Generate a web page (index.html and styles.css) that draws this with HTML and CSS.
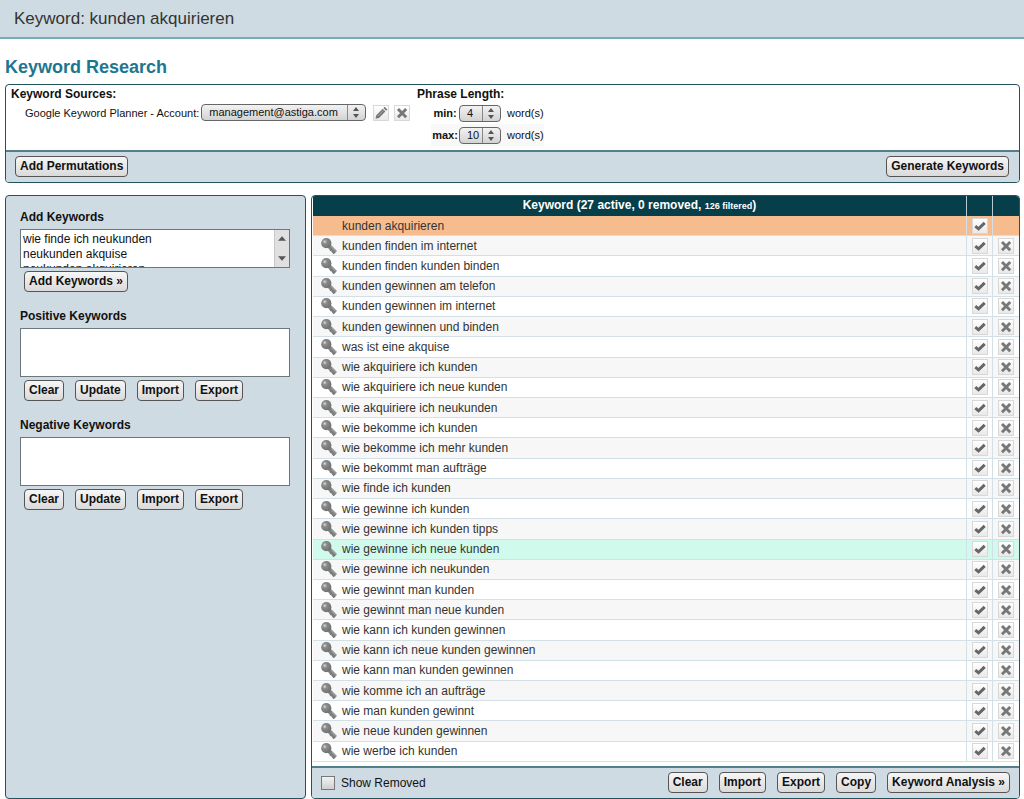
FILE: index.html
```html
<!DOCTYPE html>
<html lang="de">
<head>
<meta charset="utf-8">
<meta name="viewport" content="width=device-width, initial-scale=1">
<title>Keyword: kunden akquirieren</title>
<link rel="stylesheet" href="styles.css">
</head>
<body>
<svg class="sprite" aria-hidden="true">
  <defs>
    <radialGradient id="ball" cx="0.35" cy="0.35" r="0.7"><stop offset="0" stop-color="#dcdcdc"/><stop offset="0.3" stop-color="#8a8c8c"/><stop offset="1" stop-color="#6e7070"/></radialGradient>
  </defs>
  <symbol id="key" viewBox="0 0 16 16">
    <path d="M7.5 7.500 L14.4 14.4" stroke="#7f8181" stroke-width="4.2"/>
    <path d="M9.2 12.8 l2-2 M11.800 15.400 l2-2" stroke="#7b7d7d" stroke-width="2.2"/>
    <path d="M10.4 8.800 L15 13.2" stroke="#999b9b" stroke-width="1.400"/>
    <circle cx="5.300" cy="5.200" r="5.100" fill="url(#ball)"/>
  </symbol>
  <symbol id="check" viewBox="0 0 14 14">
    <path d="M2.300 7.200 L5.500 9.800 L11.700 3.800" fill="none" stroke="#666" stroke-width="3"/>
  </symbol>
  <symbol id="cross" viewBox="0 0 14 14">
    <path d="M3 3 L11.200 11.200 M11.200 3 L3 11.200" fill="none" stroke="#777" stroke-width="2.900"/>
  </symbol>
  <symbol id="pencil" viewBox="0 0 14 14">
    <path d="M1.500 12.700 L2.300 9.300 L8.700 2.800 L11.400 5.400 L5 11.900 Z M9.400 2.100 L10.700 .8 L13.400 3.400 L12.100 4.700 Z" fill="#777"/>
    <path d="M4 9.900 L9.500 4.300" stroke="#aaa" stroke-width="1"/>
  </symbol>
</svg>

<header class="topbar">Keyword: kunden akquirieren</header>

<main class="page">
  <h1>Keyword Research</h1>

  <section class="panel settings">
    <div class="settings-body">
      <div class="sources">
        <h2>Keyword Sources:</h2>
        <div class="source-row">
          <label for="account">Google Keyword Planner - Account:</label>
          <select id="account" class="account"><option>management@astiga.com</option></select>
          <button class="icon" aria-label="Edit"><svg><use href="#pencil"/></svg></button>
          <button class="icon" aria-label="Delete"><svg><use href="#cross"/></svg></button>
        </div>
      </div>
      <div class="phrase">
        <h2>Phrase Length:</h2>
        <div class="phrase-row"><label for="min">min:</label><select id="min"><option>4</option></select><span>word(s)</span></div>
        <div class="phrase-row shaded"><label for="max">max:</label><select id="max"><option>10</option></select><span>word(s)</span></div>
      </div>
    </div>
    <div class="settings-actions">
      <button class="btn">Add Permutations</button>
      <button class="btn">Generate Keywords</button>
    </div>
  </section>

  <div class="workspace">
    <aside class="panel side">
      <div class="field">
        <label for="add">Add Keywords</label>
        <div class="scrollbox">
          <textarea id="add">wie finde ich neukunden
neukunden akquise
neukunden akquirieren</textarea>
          <div class="scrollbar" aria-hidden="true">
            <svg viewBox="0 0 9 5"><path d="M0 5 L4.500 0 L9 5 Z" fill="#555"/></svg>
            <svg viewBox="0 0 9 5"><path d="M0 0 L4.500 5 L9 0 Z" fill="#555"/></svg>
          </div>
        </div>
        <div class="buttons"><button class="btn">Add Keywords »</button></div>
      </div>
      <div class="field">
        <label for="pos">Positive Keywords</label>
        <textarea id="pos"></textarea>
        <div class="buttons"><button class="btn">Clear</button><button class="btn">Update</button><button class="btn">Import</button><button class="btn">Export</button></div>
      </div>
      <div class="field">
        <label for="neg">Negative Keywords</label>
        <textarea id="neg"></textarea>
        <div class="buttons"><button class="btn">Clear</button><button class="btn">Update</button><button class="btn">Import</button><button class="btn">Export</button></div>
      </div>
    </aside>

    <section class="panel list">
      <table>
        <thead>
          <tr><th>Keyword (27 active, 0 removed, <small>126 filtered</small>)</th><th class="act"></th><th class="act"></th></tr>
        </thead>
        <tbody>
          <tr class="seed"><td class="seed-name">kunden akquirieren</td><td><button class="icon" aria-label="OK"><svg><use href="#check"/></svg></button></td><td></td></tr>
          <tr><td><svg class="key"><use href="#key"/></svg>kunden finden im internet</td><td><button class="icon" aria-label="OK"><svg><use href="#check"/></svg></button></td><td><button class="icon" aria-label="Remove"><svg><use href="#cross"/></svg></button></td></tr>
          <tr><td><svg class="key"><use href="#key"/></svg>kunden finden kunden binden</td><td><button class="icon" aria-label="OK"><svg><use href="#check"/></svg></button></td><td><button class="icon" aria-label="Remove"><svg><use href="#cross"/></svg></button></td></tr>
          <tr><td><svg class="key"><use href="#key"/></svg>kunden gewinnen am telefon</td><td><button class="icon" aria-label="OK"><svg><use href="#check"/></svg></button></td><td><button class="icon" aria-label="Remove"><svg><use href="#cross"/></svg></button></td></tr>
          <tr><td><svg class="key"><use href="#key"/></svg>kunden gewinnen im internet</td><td><button class="icon" aria-label="OK"><svg><use href="#check"/></svg></button></td><td><button class="icon" aria-label="Remove"><svg><use href="#cross"/></svg></button></td></tr>
          <tr><td><svg class="key"><use href="#key"/></svg>kunden gewinnen und binden</td><td><button class="icon" aria-label="OK"><svg><use href="#check"/></svg></button></td><td><button class="icon" aria-label="Remove"><svg><use href="#cross"/></svg></button></td></tr>
          <tr><td><svg class="key"><use href="#key"/></svg>was ist eine akquise</td><td><button class="icon" aria-label="OK"><svg><use href="#check"/></svg></button></td><td><button class="icon" aria-label="Remove"><svg><use href="#cross"/></svg></button></td></tr>
          <tr><td><svg class="key"><use href="#key"/></svg>wie akquiriere ich kunden</td><td><button class="icon" aria-label="OK"><svg><use href="#check"/></svg></button></td><td><button class="icon" aria-label="Remove"><svg><use href="#cross"/></svg></button></td></tr>
          <tr><td><svg class="key"><use href="#key"/></svg>wie akquiriere ich neue kunden</td><td><button class="icon" aria-label="OK"><svg><use href="#check"/></svg></button></td><td><button class="icon" aria-label="Remove"><svg><use href="#cross"/></svg></button></td></tr>
          <tr><td><svg class="key"><use href="#key"/></svg>wie akquiriere ich neukunden</td><td><button class="icon" aria-label="OK"><svg><use href="#check"/></svg></button></td><td><button class="icon" aria-label="Remove"><svg><use href="#cross"/></svg></button></td></tr>
          <tr><td><svg class="key"><use href="#key"/></svg>wie bekomme ich kunden</td><td><button class="icon" aria-label="OK"><svg><use href="#check"/></svg></button></td><td><button class="icon" aria-label="Remove"><svg><use href="#cross"/></svg></button></td></tr>
          <tr><td><svg class="key"><use href="#key"/></svg>wie bekomme ich mehr kunden</td><td><button class="icon" aria-label="OK"><svg><use href="#check"/></svg></button></td><td><button class="icon" aria-label="Remove"><svg><use href="#cross"/></svg></button></td></tr>
          <tr><td><svg class="key"><use href="#key"/></svg>wie bekommt man aufträge</td><td><button class="icon" aria-label="OK"><svg><use href="#check"/></svg></button></td><td><button class="icon" aria-label="Remove"><svg><use href="#cross"/></svg></button></td></tr>
          <tr><td><svg class="key"><use href="#key"/></svg>wie finde ich kunden</td><td><button class="icon" aria-label="OK"><svg><use href="#check"/></svg></button></td><td><button class="icon" aria-label="Remove"><svg><use href="#cross"/></svg></button></td></tr>
          <tr><td><svg class="key"><use href="#key"/></svg>wie gewinne ich kunden</td><td><button class="icon" aria-label="OK"><svg><use href="#check"/></svg></button></td><td><button class="icon" aria-label="Remove"><svg><use href="#cross"/></svg></button></td></tr>
          <tr><td><svg class="key"><use href="#key"/></svg>wie gewinne ich kunden tipps</td><td><button class="icon" aria-label="OK"><svg><use href="#check"/></svg></button></td><td><button class="icon" aria-label="Remove"><svg><use href="#cross"/></svg></button></td></tr>
          <tr class="hover"><td><svg class="key"><use href="#key"/></svg>wie gewinne ich neue kunden</td><td><button class="icon" aria-label="OK"><svg><use href="#check"/></svg></button></td><td><button class="icon" aria-label="Remove"><svg><use href="#cross"/></svg></button></td></tr>
          <tr><td><svg class="key"><use href="#key"/></svg>wie gewinne ich neukunden</td><td><button class="icon" aria-label="OK"><svg><use href="#check"/></svg></button></td><td><button class="icon" aria-label="Remove"><svg><use href="#cross"/></svg></button></td></tr>
          <tr><td><svg class="key"><use href="#key"/></svg>wie gewinnt man kunden</td><td><button class="icon" aria-label="OK"><svg><use href="#check"/></svg></button></td><td><button class="icon" aria-label="Remove"><svg><use href="#cross"/></svg></button></td></tr>
          <tr><td><svg class="key"><use href="#key"/></svg>wie gewinnt man neue kunden</td><td><button class="icon" aria-label="OK"><svg><use href="#check"/></svg></button></td><td><button class="icon" aria-label="Remove"><svg><use href="#cross"/></svg></button></td></tr>
          <tr><td><svg class="key"><use href="#key"/></svg>wie kann ich kunden gewinnen</td><td><button class="icon" aria-label="OK"><svg><use href="#check"/></svg></button></td><td><button class="icon" aria-label="Remove"><svg><use href="#cross"/></svg></button></td></tr>
          <tr><td><svg class="key"><use href="#key"/></svg>wie kann ich neue kunden gewinnen</td><td><button class="icon" aria-label="OK"><svg><use href="#check"/></svg></button></td><td><button class="icon" aria-label="Remove"><svg><use href="#cross"/></svg></button></td></tr>
          <tr><td><svg class="key"><use href="#key"/></svg>wie kann man kunden gewinnen</td><td><button class="icon" aria-label="OK"><svg><use href="#check"/></svg></button></td><td><button class="icon" aria-label="Remove"><svg><use href="#cross"/></svg></button></td></tr>
          <tr><td><svg class="key"><use href="#key"/></svg>wie komme ich an aufträge</td><td><button class="icon" aria-label="OK"><svg><use href="#check"/></svg></button></td><td><button class="icon" aria-label="Remove"><svg><use href="#cross"/></svg></button></td></tr>
          <tr><td><svg class="key"><use href="#key"/></svg>wie man kunden gewinnt</td><td><button class="icon" aria-label="OK"><svg><use href="#check"/></svg></button></td><td><button class="icon" aria-label="Remove"><svg><use href="#cross"/></svg></button></td></tr>
          <tr><td><svg class="key"><use href="#key"/></svg>wie neue kunden gewinnen</td><td><button class="icon" aria-label="OK"><svg><use href="#check"/></svg></button></td><td><button class="icon" aria-label="Remove"><svg><use href="#cross"/></svg></button></td></tr>
          <tr><td><svg class="key"><use href="#key"/></svg>wie werbe ich kunden</td><td><button class="icon" aria-label="OK"><svg><use href="#check"/></svg></button></td><td><button class="icon" aria-label="Remove"><svg><use href="#cross"/></svg></button></td></tr>
        </tbody>
      </table>
      <div class="list-footer">
        <label class="toggle"><input type="checkbox">Show Removed</label>
        <div class="buttons"><button class="btn">Clear</button><button class="btn">Import</button><button class="btn">Export</button><button class="btn">Copy</button><button class="btn">Keyword Analysis »</button></div>
      </div>
    </section>
  </div>
</main>
</body>
</html>
```
FILE: styles.css
```css
* { box-sizing: border-box; }

body {
  margin: 0;
  min-height: 100vh;
  display: flex;
  flex-direction: column;
  background: #fff;
  color: #111;
  font: 12px/16px "Liberation Sans", Arial, sans-serif;
}

button, select, textarea, input { font: inherit; color: inherit; margin: 0; }
svg { display: block; }
.sprite { position: absolute; width: 0; height: 0; }

.topbar {
  padding: 8px 14px;
  border-bottom: 2px solid #74adb6;
  background: #cfdbe2;
  color: #333;
  font-size: 17px;
  line-height: 21px;
}

.page {
  flex: 1;
  display: flex;
  flex-direction: column;
  padding: 17px 4px 0 5px;
}

h1 {
  margin: 0 0 6px;
  color: #1d7690;
  font-size: 18px;
  line-height: 22px;
}

h2 { margin: 0; font-size: 12px; line-height: 16px; }

.panel {
  border: 1px solid #23535d;
  border-radius: 4px;
  overflow: hidden;
}

.settings { margin-bottom: 12px; }
.settings-body {
  display: grid;
  grid-template-columns: 406px 1fr;
  padding: 1px 5px 4px;
}
.source-row {
  display: flex;
  align-items: center;
  gap: 5px;
  height: 21px;
  padding-left: 14px;
  font-size: 11px;
}
.source-row .account { margin: 0 2px 0 -3px; }

.phrase { justify-self: start; }
.phrase-row {
  display: flex;
  align-items: center;
  height: 22px;
  margin-left: 14px;
  font-size: 11px;
}
.phrase-row label { width: 28px; text-align: center; font-weight: bold; }
.phrase-row span { margin-left: 6px; }
.shaded { background: #f8f8f8; }

select {
  width: 42px;
  height: 17px;
  padding: 0 18px 0 7px;
  border: 1px solid #666;
  border-radius: 4px;
  appearance: none;
  background:
    url("data:image/svg+xml,%3Csvg xmlns='http://www.w3.org/2000/svg' width='18' height='15'%3E%3Cpath d='M.5 0v15' stroke='%23888'/%3E%3Cpath d='M6 6l3-4 3 4zM6 9l3 4 3-4z' fill='%23555'/%3E%3C/svg%3E") right center no-repeat,
    linear-gradient(#f2f2f2, #d3d3d3);
  font-size: 11px;
  line-height: 15px;
}
select.account { width: 165px; }

.icon {
  width: 16px;
  height: 16px;
  padding: 0;
  border: 1px solid #d8d8d8;
  background: linear-gradient(#fff, #e9e9e9);
}
.icon svg { width: 14px; height: 14px; }

.settings-actions {
  display: flex;
  justify-content: space-between;
  padding: 4px 10px 5px 9px;
  border-top: 2px solid #527f8a;
  background: #cfdbe2;
}

.btn {
  height: 21px;
  padding: 0 4px;
  border: 1px solid #555;
  border-radius: 4px;
  background: linear-gradient(#f6f6f6, #dadada);
  font-weight: bold;
  line-height: 19px;
  white-space: nowrap;
}

.workspace {
  flex: 1;
  display: grid;
  grid-template-columns: 301px minmax(0, 1fr);
  gap: 5px;
}

.side {
  padding: 13px 15px 14px 14px;
  background: #cfdbe2;
}
.field { margin-bottom: 16px; }
.field label { display: block; font-weight: bold; }
textarea {
  display: block;
  width: 100%;
  height: 49px;
  margin-top: 4px;
  padding: 2px;
  border: 1px solid #6d787c;
  background: #fff;
  line-height: 15px;
  resize: none;
}
.scrollbox {
  display: flex;
  height: 39px;
  margin-top: 4px;
  border: 1px solid #6d787c;
  background: #fff;
}
.scrollbox textarea {
  flex: 1;
  height: 100%;
  margin: 0;
  border: 0;
  scrollbar-width: none;
}
.scrollbar {
  display: flex;
  flex-direction: column;
  justify-content: space-between;
  align-items: center;
  width: 15px;
  padding: 6px 0;
  border-left: 1px solid #c8c8c8;
  background: #e0e0e0;
}
.scrollbar svg { width: 8px; height: 5px; }

.buttons { display: flex; gap: 11px; }
.field .buttons { padding: 3px 4px 0; }

.list {
  display: flex;
  flex-direction: column;
}
table {
  width: calc(100% - 1px);
  height: 566px;
  margin-left: 1px;
  border-collapse: separate;
  border-spacing: 0;
  table-layout: fixed;
  color: #333;
}
th {
  height: 19px;
  padding: 0;
  border-right: 1px solid #b8cbd0;
  background: #063e49;
  color: #fff;
  line-height: 19px;
}
th small { font-size: 9px; }
th.act { width: 26px; }
td {
  padding: 0 4px 0 5px;
  border-bottom: 1px solid #d3e0e5;
  border-right: 1px solid #d3e0e5;
  line-height: 18px;
}
tr > :last-child { border-right: 0; }
td:first-child { padding-left: 8px; }
td.seed-name { padding-left: 29px; }
tbody tr:nth-child(even) { background: #f7f7f7; }
tbody tr.seed { background: #f7bc8e; }
tbody tr.hover { background: #d0faec; }
.key { float: left; width: 16px; height: 16px; margin: 1px 5px 0 0; }
td .icon { display: block; }

.list-footer {
  display: flex;
  align-items: center;
  justify-content: space-between;
  margin-top: auto;
  padding: 4px 9px 5px;
  border-top: 2px solid #527f8a;
  background: #cfdbe2;
}
.toggle { display: flex; align-items: center; gap: 6px; }
.toggle input {
  width: 14px;
  height: 14px;
  appearance: none;
  border: 1px solid #777;
  background: linear-gradient(#f2f2f2, #cfcfcf);
}
```
